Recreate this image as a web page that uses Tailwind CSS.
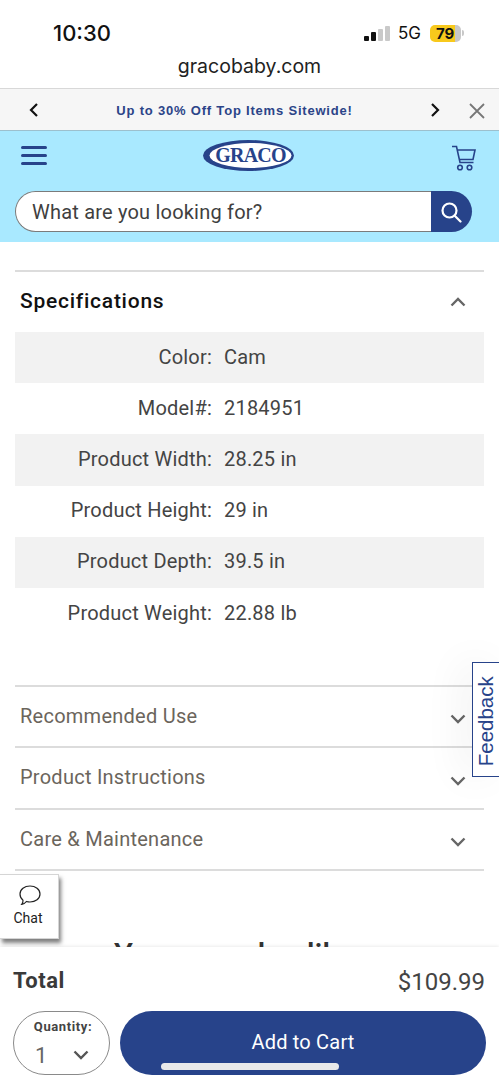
<!DOCTYPE html>
<html lang="en">

<head>
    <meta charset="UTF-8">
    <meta name="viewport" content="width=device-width, initial-scale=1.0">
    <script src="https://cdn.jsdelivr.net/npm/@tailwindcss/browser@4"></script>
    <title>Graco</title>
</head>

<body class="bg-white font-['Roboto',sans-serif] text-[#3a3a3a]">
    <div class="relative w-[499px] h-[1080px] overflow-hidden bg-white">

        <!-- Status bar -->
        <div class="h-[54px] flex items-start justify-between pl-[53px] pr-[35px] pt-[20px]">
            <span class="font-['Inter',sans-serif] text-[22px] leading-[26px] font-medium text-[#111]">10:30</span>
            <div class="flex items-center gap-[8px] h-[26px]">
                <div class="flex items-end gap-[2.5px] h-[16px]">
                    <div class="w-[4.5px] h-[5px] rounded-[1px] bg-[#111]"></div>
                    <div class="w-[4.5px] h-[9px] rounded-[1px] bg-[#111]"></div>
                    <div class="w-[4.5px] h-[12px] rounded-[1px] bg-[#c9c9c9]"></div>
                    <div class="w-[4.5px] h-[15px] rounded-[1px] bg-[#c9c9c9]"></div>
                </div>
                <span class="font-['Inter',sans-serif] text-[17px] leading-none text-[#111] mr-[1px]">5G</span>
                <div class="flex items-center">
                    <div class="w-[31px] h-[17px] rounded-[5px] bg-[linear-gradient(90deg,#f8c91c_0,#f8c91c_25px,#c8c8c8_25px)] font-['Inter',sans-serif] text-[15px] leading-[17px] font-bold text-[#111] pl-[6px]">79</div>
                    <div class="w-[2px] h-[6px] bg-[#c8c8c8] rounded-r-sm ml-[1px]"></div>
                </div>
            </div>
        </div>

        <!-- Url -->
        <div class="h-[34px] flex items-center justify-center pb-[8px] font-['Inter',sans-serif] text-[19.5px] text-[#222]">gracobaby.com</div>

        <!-- Promo bar -->
        <div class="h-[42px] bg-[#f6f6f6] border-t border-[#d8d8d8] flex items-center relative">
            <svg class="absolute left-[28px] top-[13px]" width="12" height="16" viewBox="0 0 12 16" fill="none" stroke="#111" stroke-width="2.2"><path d="M9 2 3 8l6 6" /></svg>
            <div class="w-full text-center pr-[30px] pt-[2px] font-['Liberation_Sans',sans-serif] text-[13px] font-bold tracking-[0.8px] text-[#2b4488]">Up to 30% Off Top Items Sitewide!</div>
            <svg class="absolute left-[429px] top-[13px]" width="12" height="16" viewBox="0 0 12 16" fill="none" stroke="#111" stroke-width="2.2"><path d="M3 2l6 6-6 6" /></svg>
            <svg class="absolute left-[469px] top-[14px]" width="16" height="16" viewBox="0 0 16 16" fill="none" stroke="#777" stroke-width="1.8"><path d="M1 1l14 14M15 1 1 15" /></svg>
        </div>

        <!-- Header -->
        <div class="h-[112px] bg-[#a9e9ff] border-t border-[#9cc0ce] relative">
            <div class="absolute left-[21px] top-[15px] w-[26px] flex flex-col gap-[5px]">
                <div class="h-[3px] rounded-full bg-[#27438a]"></div>
                <div class="h-[3px] rounded-full bg-[#27438a]"></div>
                <div class="h-[3px] rounded-full bg-[#27438a]"></div>
            </div>
            <!-- Logo -->
            <svg class="absolute left-[203px] top-[9px]" width="91" height="31" viewBox="0 0 91 31">
                <ellipse cx="45.5" cy="15.500" rx="45.500" ry="15.500" fill="#27438a" />
                <ellipse cx="47.500" cy="15.500" rx="41" ry="12.500" fill="#fff" />
                <text x="47.500" y="22" text-anchor="middle" font-family="Liberation Serif" font-size="20" font-weight="bold" letter-spacing="-0.8" fill="#27438a">GRACO</text>
            </svg>
            <svg class="absolute left-[451px] top-[14px]" width="25" height="26" viewBox="0 0 25 26" fill="none" stroke="#27438a" stroke-width="1.6"><path d="M1 1.500h4.500l3.500 16h13.500M6.200 5H24l-2 9.500H8" /><circle cx="9" cy="22.500" r="2.300" /><circle cx="18.500" cy="22.500" r="2.300" /></svg>
            <!-- Search -->
            <div class="absolute left-[15px] top-[60px] w-[457px] h-[41px] flex">
                <div class="flex-1 bg-white border border-[#7b7b7b] border-r-0 rounded-l-full pl-[16px] flex items-center text-[20px] tracking-[0.2px] text-[#3f3f3f]">What are you looking for?</div>
                <div class="w-[41px] bg-[#27438a] rounded-r-full flex items-center justify-center pr-[2px]">
                    <svg width="22" height="22" viewBox="0 0 22 22" fill="none" stroke="#fff" stroke-width="2.2"><circle cx="9.500" cy="9.500" r="7" /><path d="m14.500 14.500 6 6" stroke-linecap="round" /></svg>
                </div>
            </div>
        </div>

        <!-- Specifications -->
        <div class="mx-[15px] mt-[28px] border-t-2 border-[#dcdcdc]">
            <div class="h-[60px] flex items-center justify-between pl-[5px] pr-[18px]">
                <h2 class="text-[21px] font-medium text-[#111] tracking-[0.75px]">Specifications</h2>
                <svg width="16" height="10" viewBox="0 0 16 10" fill="none" stroke="#666" stroke-width="2.4"><path d="M1.500 8.500 8 2l6.500 6.500" /></svg>
            </div>
            <div class="text-[20px] tracking-[0.2px] text-[#444]">
                <div class="grid grid-cols-[197px_1fr] gap-x-[12px] h-[51.2px] pb-[2px] items-center bg-[#f2f2f2]"><span class="text-right">Color:</span><span>Cam</span></div>
                <div class="grid grid-cols-[197px_1fr] gap-x-[12px] h-[51.2px] pb-[2px] items-center"><span class="text-right">Model#:</span><span>2184951</span></div>
                <div class="grid grid-cols-[197px_1fr] gap-x-[12px] h-[51.2px] pb-[2px] items-center bg-[#f2f2f2]"><span class="text-right">Product Width:</span><span>28.25 in</span></div>
                <div class="grid grid-cols-[197px_1fr] gap-x-[12px] h-[51.2px] pb-[2px] items-center"><span class="text-right">Product Height:</span><span>29 in</span></div>
                <div class="grid grid-cols-[197px_1fr] gap-x-[12px] h-[51.2px] pb-[2px] items-center bg-[#f2f2f2]"><span class="text-right">Product Depth:</span><span>39.5 in</span></div>
                <div class="grid grid-cols-[197px_1fr] gap-x-[12px] h-[51.2px] pb-[2px] items-center"><span class="text-right">Product Weight:</span><span>22.88 lb</span></div>
            </div>
        </div>

        <!-- Accordions -->
        <div class="mx-[15px] mt-[46px] border-t-2 border-[#dcdcdc] text-[20px] tracking-[0.25px] text-[#6b655c]">
            <div class="h-[61.3px] flex items-center justify-between pl-[5px] pr-[18px] border-b-2 border-[#dcdcdc]">
                <span class="pb-[2px]">Recommended Use</span>
                <svg class="mt-[5px]" width="16" height="10" viewBox="0 0 16 10" fill="none" stroke="#666" stroke-width="2.4"><path d="M1.500 1.500 8 8l6.500-6.500" /></svg>
            </div>
            <div class="h-[61.3px] flex items-center justify-between pl-[5px] pr-[18px] border-b-2 border-[#dcdcdc]">
                <span class="pb-[2px]">Product Instructions</span>
                <svg class="mt-[5px]" width="16" height="10" viewBox="0 0 16 10" fill="none" stroke="#666" stroke-width="2.4"><path d="M1.500 1.500 8 8l6.500-6.500" /></svg>
            </div>
            <div class="h-[61.3px] flex items-center justify-between pl-[5px] pr-[18px] border-b-2 border-[#dcdcdc]">
                <span>Care &amp; Maintenance</span>
                <svg class="mt-[5px]" width="16" height="10" viewBox="0 0 16 10" fill="none" stroke="#666" stroke-width="2.4"><path d="M1.500 1.500 8 8l6.500-6.500" /></svg>
            </div>
        </div>

        <!-- Heading cut off by the sticky footer -->
        <div class="absolute left-[114px] top-[936px] text-[31px] leading-[38px] font-medium text-[#333] whitespace-nowrap">You may also like</div>

        <!-- Feedback tab -->
        <div class="absolute left-[472px] top-[662px] w-[27px] h-[115px] bg-white border border-r-0 border-[#27438a] flex items-center justify-center pt-[4px] shadow-[-10px_0_40px_rgba(0,0,0,0.06)]">
            <span class="font-['Liberation_Sans',sans-serif] text-[20.5px] leading-none text-[#27438a] -rotate-90 whitespace-nowrap">Feedback</span>
        </div>

        <!-- Chat -->
        <div class="absolute left-0 top-[874px] w-[59px] h-[65px] bg-white border border-l-0 border-[#d5d5d5] shadow-[2px_4px_4px_rgba(0,0,0,0.5)] flex flex-col items-center pt-[10px] pr-[2px]">
            <svg class="ml-[3px]" width="22" height="21" viewBox="0 0 22 21" fill="none" stroke="#222" stroke-width="1.2"><path d="M11 1c5.500 0 10 3.400 10 8s-4.500 8-10 8c-1.300 0-2.500-.2-3.600-.5C6.300 18 4.800 19 2.800 19.300c.8-1 1.300-2.300 1.200-4.100C2.200 13.800 1 11.600 1 9c0-4.600 4.500-8 10-8Z" /></svg>
            <span class="text-[14px] leading-[18px] mt-[3px] text-[#222]">Chat</span>
        </div>

        <!-- Sticky footer -->
        <div class="absolute left-0 top-[947px] w-full h-[133px] bg-white shadow-[0_-1px_3px_rgba(0,0,0,0.08)] px-[13px]">
            <div class="h-[64px] flex items-center justify-between pr-[1px] pt-[2px]">
                <span class="text-[22px] font-bold tracking-[0.5px] text-[#3a3a3a]">Total</span>
                <span class="text-[24px] mt-[4px] text-[#444]">$109.99</span>
            </div>
            <div class="flex gap-[10px]">
                <div class="w-[97px] h-[64px] rounded-[32px] border border-[#8a8a8a] relative">
                    <div class="text-center text-[13px] leading-[16px] font-bold tracking-[0.6px] text-[#444] pt-[7px] pl-[3px]">Quantity:</div>
                    <span class="absolute left-[21px] top-[31px] text-[22px] leading-[26px] text-[#666]">1</span>
                    <svg class="absolute left-[59px] top-[38px]" width="16" height="10" viewBox="0 0 16 10" fill="none" stroke="#555" stroke-width="2.4"><path d="M1.500 1.500 8 8l6.500-6.500" /></svg>
                </div>
                <div class="w-[366px] h-[64px] rounded-[32px] bg-[#27438a] flex items-center justify-center pb-[2px] text-[20px] tracking-[0.2px] text-white">Add to Cart</div>
            </div>
        </div>

        <!-- Home indicator -->
        <div class="absolute left-[161px] top-[1063px] w-[178px] h-[7px] rounded-full bg-[#e9e9e9]"></div>
    </div>
</body>

</html>
